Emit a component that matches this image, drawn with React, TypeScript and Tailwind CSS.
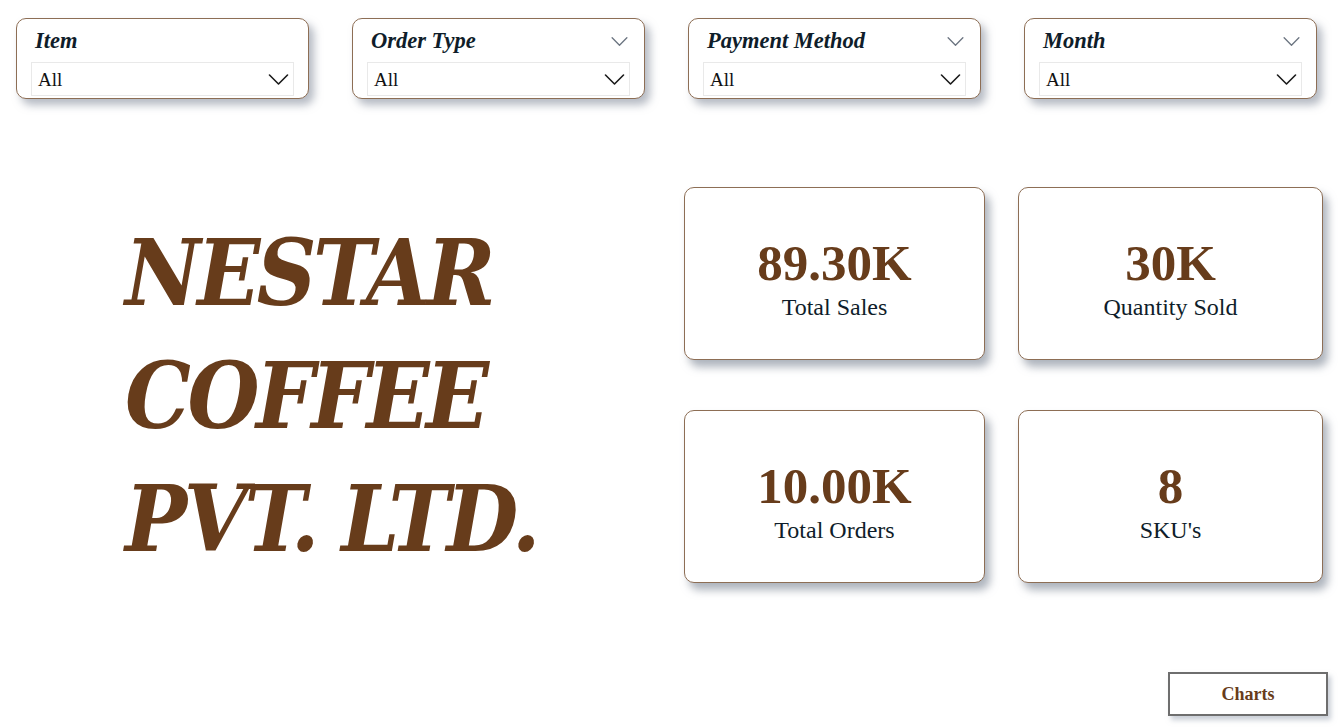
import React from "react";

const Chevron = ({ className, color = "#1f2933", w = 20, h = 11 }: { className?: string; color?: string; w?: number; h?: number }) => (
  <svg width={w} height={h} viewBox="0 0 20 11" className={className} fill="none">
    <polyline points="1,1 10,10 19,1" stroke={color} strokeWidth="1.6" strokeLinecap="round" strokeLinejoin="round" />
  </svg>
);

const Slicer = ({ title, headerChevron }: { title: string; headerChevron: boolean }) => (
  <div className="w-[293px] h-[81px] rounded-[10px] border border-[#8d6e55] bg-white shadow-[5px_6px_8px_rgba(120,130,145,0.55)] px-[14px] pt-[8px] flex flex-col">
    <div className="flex items-center justify-between h-[28px] pl-[4px] pr-[2px]">
      <span className="font-['Liberation_Serif',serif] italic font-bold text-[22.5px] text-[#0f1d2a] leading-none">{title}</span>
      {headerChevron && <Chevron color="#6b7480" w={17} h={9} />}
    </div>
    <div className="mt-[7px] h-[34px] border border-[#e9e9e9] flex items-center justify-between pl-[6px] pr-[4px]">
      <span className="font-['Liberation_Serif',serif] text-[19px] text-[#111] leading-none">All</span>
      <Chevron color="#1b1b1b" w={21} h={11} />
    </div>
  </div>
);

const Card = ({ value, label, w }: { value: string; label: string; w: string }) => (
  <div className={`${w} h-[173px] rounded-[10px] border border-[#8d6e55] bg-white shadow-[5px_7px_8px_rgba(120,130,145,0.6)] flex flex-col items-center justify-center pt-[10px]`}>
    <span className="font-['Liberation_Serif',serif] font-bold text-[51px] leading-[52px] text-[#673c1b]">{value}</span>
    <span className="font-['Liberation_Serif',serif] text-[24px] leading-[26px] text-[#0f1d2a] mt-[5px]">{label}</span>
  </div>
);

export default function App() {
  return (
    <div className="w-[1341px] h-[728px] bg-white relative overflow-hidden">
      <div className="flex pt-[18px] pl-[16px] gap-[43px]">
        <Slicer title="Item" headerChevron={false} />
        <Slicer title="Order Type" headerChevron={true} />
        <Slicer title="Payment Method" headerChevron={true} />
        <Slicer title="Month" headerChevron={true} />
      </div>
      <div className="flex mt-[88px]">
        <div className="w-[684px] pl-[125px] pt-[25px]">
          <div className="font-['DejaVu_Serif_Condensed','DejaVu_Serif',serif] italic font-bold text-[92px] leading-[123px] text-[#673c1b] tracking-[-3.5px]">
            <div>NESTAR</div>
            <div>COFFEE</div>
            <div>PVT. LTD.</div>
          </div>
        </div>
        <div className="flex flex-col gap-[50px]">
          <div className="flex gap-[33px]">
            <Card value="89.30K" label="Total Sales" w="w-[301px]" />
            <Card value="30K" label="Quantity Sold" w="w-[305px]" />
          </div>
          <div className="flex gap-[33px]">
            <Card value="10.00K" label="Total Orders" w="w-[301px]" />
            <Card value="8" label="SKU's" w="w-[305px]" />
          </div>
        </div>
      </div>
      <div className="absolute left-[1168px] top-[672px] w-[160px] h-[44px] border-2 border-[#6e6e6e] bg-white shadow-[3px_4px_5px_rgba(150,160,175,0.5)] flex items-center justify-center">
        <span className="font-['Liberation_Serif',serif] font-bold text-[18px] text-[#673c1b]">Charts</span>
      </div>
    </div>
  );
}
